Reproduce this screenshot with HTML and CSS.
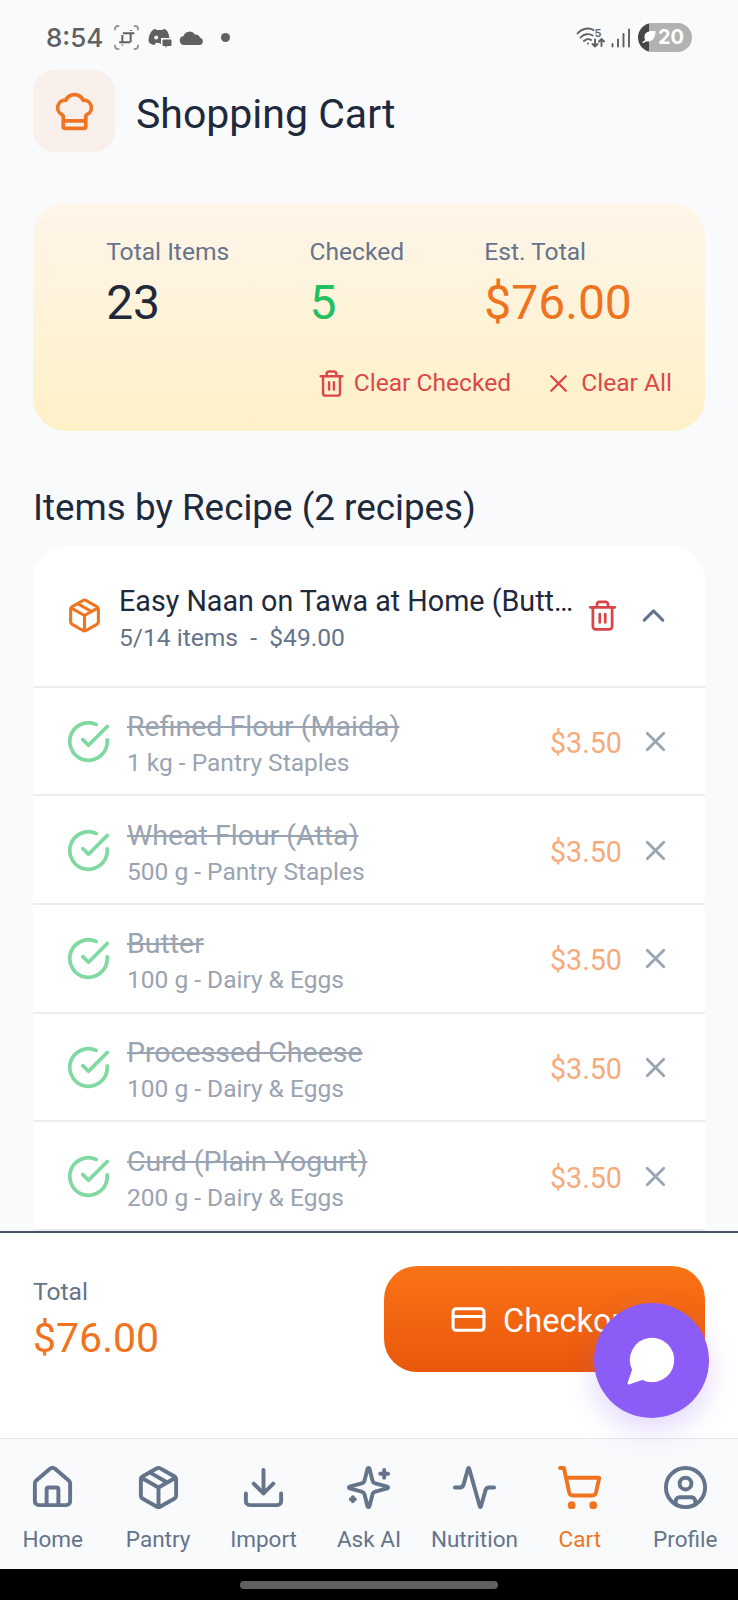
FILE: index.html
```html
<!DOCTYPE html>
<html lang="en">
<head>
<meta charset="utf-8">
<title>Shopping Cart</title>
<link rel="stylesheet" href="styles.css">
</head>
<body>
<svg class="defs" aria-hidden="true">
  <symbol id="trash" viewBox="0 0 24 24"><path d="M3 6h18M19 6v14a2 2 0 0 1-2 2H7a2 2 0 0 1-2-2V6M8 6V4a2 2 0 0 1 2-2h4a2 2 0 0 1 2 2v2M10 11v6M14 11v6"/></symbol>
  <symbol id="x" viewBox="0 0 24 24"><path d="M18 6 6 18M6 6l12 12"/></symbol>
  <symbol id="package" viewBox="0 0 24 24"><path d="M11 21.73a2 2 0 0 0 2 0l7-4A2 2 0 0 0 21 16V8a2 2 0 0 0-1-1.73l-7-4a2 2 0 0 0-2 0l-7 4A2 2 0 0 0 3 8v8a2 2 0 0 0 1 1.73zM12 22V12M3.3 7 12 12l8.7-5M7.5 4.27l9 5.15"/></symbol>
  <symbol id="check" viewBox="0 0 24 24"><path d="M22 11.080V12a10 10 0 1 1-5.930-9.140M9 11.010l3 3L22 4"/></symbol>
</svg>
<div class="screen">
  <div class="status">
    <span class="clock">8:54</span>
    <svg class="st-crop" viewBox="0 0 24 24"><path class="frame" d="M1 5V3.500Q1 1 3.500 1H5M19 1h1.500Q23 1 23 3.500V5M23 19v1.500Q23 23 20.500 23H19M5 23H3.500Q1 23 1 20.500V19"/><path d="M8 9.500v7M5 16.500h10.500M8.500 8H19.500M16 8v8.500M16.500 4.800v1M8 18.600v1"/></svg>
    <svg class="st-chat" viewBox="0 0 24 20"><path d="M7 1 9 2h5l2-1c3 .5 4.500 3 5.500 9H13v6l-2-1-3-.2L6.500 17C3 16.500.800 15 .500 13 .800 7 3 2 7 1z"/><circle class="hole" cx="8.200" cy="9.500" r="1.900"/><path d="M15.500 11.500h7q1 0 1 1v4.500q0 1-1 1H19l-1.500 2v-2h-2q-1 0-1-1v-4.500q0-1 1-1z"/></svg>
    <svg class="st-cloud" viewBox="0 0 25 14"><path d="M5 14a4.600 4.600 0 0 1-.5-9.100A6.500 6.500 0 0 1 16 3.500a5 5 0 0 1 5 3.300A3.700 3.700 0 0 1 21 14z"/></svg>
    <span class="st-dot"></span>
    <span class="grow"></span>
    <svg class="st-wifi" viewBox="0 0 29 22"><path d="M1.500 6.500C6 1 13 .500 17.500 3M4.500 10.500c3-3.500 8.500-4.500 12-2M8 14c2-2 5-2.500 7-1M19 12.500v7M16.500 17l2.500 2.500 2.500-2.500M25.500 19v-7M23 14.500l2.500-2.500 2.500 2.500"/><circle cx="12" cy="16.500" r="1"/><text x="18.500" y="9.500">5</text></svg>
    <svg class="st-bars" viewBox="0 0 20 20"><path d="M1.500 16v2.500M7 11.500v7M12.500 6v12.500M18 1.500v17"/></svg>
    <span class="battery"><svg class="leaf" viewBox="0 0 15 15"><path d="M14.500 1C8 .500 4 2 3.500 6c-.2 1.500.1 3 .8 4L1 12.500l1.500.5 3-1.800c5 1.200 9-2.200 9-10.200z"/></svg>20</span>
  </div>

  <header class="header">
    <span class="logo"><svg class="ico i45" viewBox="0 0 24 24"><path d="M17 21a1 1 0 0 0 1-1v-5.350c0-.457.316-.844.727-1.041a4 4 0 0 0-2.134-7.589 5 5 0 0 0-9.186 0 4 4 0 0 0-2.134 7.588c.411.198.727.585.727 1.041V20a1 1 0 0 0 1 1ZM6 17h12"/></svg></span>
    <h1>Shopping Cart</h1>
  </header>

  <main class="content">
    <section class="summary">
      <div class="stats">
        <div><span class="label">Total Items</span><b class="num">23</b></div>
        <div><span class="label">Checked</span><b class="num green">5</b></div>
        <div><span class="label">Est. Total</span><b class="num orange">$76.00</b></div>
      </div>
      <div class="actions">
        <span class="action"><svg class="ico i29"><use href="#trash"/></svg>Clear Checked</span>
        <span class="action"><svg class="ico i29"><use href="#x"/></svg>Clear All</span>
      </div>
    </section>

    <h2>Items by Recipe (2 recipes)</h2>

    <section class="recipe">
      <div class="recipe-head">
        <svg class="ico i37 orange"><use href="#package"/></svg>
        <div class="recipe-text"><span class="recipe-name">Easy Naan on Tawa at Home (Butt…</span><span class="recipe-sub">5/14 items  -  $49.00</span></div>
        <svg class="ico i33 red"><use href="#trash"/></svg>
        <svg class="ico i37 chevron" viewBox="0 0 24 24"><path d="m18 15-6-6-6 6"/></svg>
      </div>
      <div class="item"><svg class="ico i45 green"><use href="#check"/></svg><div class="item-text"><s>Refined Flour (Maida)</s><span>1 kg - Pantry Staples</span></div><span class="price">$3.50</span><svg class="ico i33"><use href="#x"/></svg></div>
      <div class="item"><svg class="ico i45 green"><use href="#check"/></svg><div class="item-text"><s>Wheat Flour (Atta)</s><span>500 g - Pantry Staples</span></div><span class="price">$3.50</span><svg class="ico i33"><use href="#x"/></svg></div>
      <div class="item"><svg class="ico i45 green"><use href="#check"/></svg><div class="item-text"><s>Butter</s><span>100 g - Dairy &amp; Eggs</span></div><span class="price">$3.50</span><svg class="ico i33"><use href="#x"/></svg></div>
      <div class="item"><svg class="ico i45 green"><use href="#check"/></svg><div class="item-text"><s>Processed Cheese</s><span>100 g - Dairy &amp; Eggs</span></div><span class="price">$3.50</span><svg class="ico i33"><use href="#x"/></svg></div>
      <div class="item"><svg class="ico i45 green"><use href="#check"/></svg><div class="item-text"><s>Curd (Plain Yogurt)</s><span>200 g - Dairy &amp; Eggs</span></div><span class="price">$3.50</span><svg class="ico i33"><use href="#x"/></svg></div>
    </section>
  </main>

  <section class="checkout">
    <div class="total"><span class="label">Total</span><b>$76.00</b></div>
    <div class="button"><svg class="ico i37" viewBox="0 0 24 24"><rect x="2" y="5" width="20" height="14" rx="2"/><path d="M2 10h20"/></svg><span>Checkout</span></div>
    <div class="fab"><svg viewBox="0 0 24 24"><path d="M7.900 20A9 9 0 1 0 4 16.100L2 22Z"/></svg></div>
  </section>

  <nav class="nav">
    <span class="tab"><svg class="ico i47" viewBox="0 0 24 24"><path d="M15 21v-8a1 1 0 0 0-1-1h-4a1 1 0 0 0-1 1v8"/><path d="M3 10a2 2 0 0 1 .709-1.528l7-5.999a2 2 0 0 1 2.582 0l7 5.999A2 2 0 0 1 21 10v9a2 2 0 0 1-2 2H5a2 2 0 0 1-2-2z"/></svg>Home</span>
    <span class="tab"><svg class="ico i47"><use href="#package"/></svg>Pantry</span>
    <span class="tab"><svg class="ico i47" viewBox="0 0 24 24"><path d="M12 15V3M21 15v4a2 2 0 0 1-2 2H5a2 2 0 0 1-2-2v-4M7 10l5 5 5-5"/></svg>Import</span>
    <span class="tab"><svg class="ico i47" viewBox="0 0 24 24"><path d="M9.937 15.500A2 2 0 0 0 8.500 14.063l-6.135-1.582a.5.5 0 0 1 0-.962L8.500 9.936A2 2 0 0 0 9.937 8.500l1.582-6.135a.5.5 0 0 1 .963 0L14.063 8.500A2 2 0 0 0 15.500 9.937l6.135 1.581a.5.5 0 0 1 0 .964L15.500 14.063a2 2 0 0 0-1.437 1.437l-1.582 6.135a.5.5 0 0 1-.963 0zM20 3v4M22 5h-4M4 17v2M5 18H3"/></svg>Ask AI</span>
    <span class="tab"><svg class="ico i47" viewBox="0 0 24 24"><path d="M22 12h-2.480a2 2 0 0 0-1.930 1.460l-2.350 8.360a.25.25 0 0 1-.48 0L9.240 2.180a.25.25 0 0 0-.48 0l-2.350 8.360A2 2 0 0 1 4.490 12H2"/></svg>Nutrition</span>
    <span class="tab active"><svg class="ico i47" viewBox="0 0 24 24"><circle cx="8" cy="21" r="1"/><circle cx="19" cy="21" r="1"/><path d="M2.050 2.050h2l2.660 12.420a2 2 0 0 0 2 1.580h9.780a2 2 0 0 0 1.950-1.570l1.650-7.430H5.120"/></svg>Cart</span>
    <span class="tab"><svg class="ico i47" viewBox="0 0 24 24"><path d="M7 20.662V19a2 2 0 0 1 2-2h6a2 2 0 0 1 2 2v1.662"/><circle cx="12" cy="10" r="3"/><circle cx="12" cy="12" r="10"/></svg>Profile</span>
  </nav>
  <div class="gesture"><span></span></div>
</div>
</body>
</html>
```
FILE: styles.css
```css
* { box-sizing: border-box; }
body { margin: 0; background: #f9fafc; font-family: Roboto, sans-serif; color: #1e293b; }
.defs { position: absolute; width: 0; height: 0; }
.screen { display: flex; flex-direction: column; width: 738px; height: 1600px; overflow: hidden; }
h1, h2, b { margin: 0; font-weight: 400; }

.ico { display: block; flex: none; fill: none; stroke: currentColor; stroke-width: 2; stroke-linecap: round; stroke-linejoin: round; }
.i29 { width: 29px; height: 29px; }
.i33 { width: 33px; height: 33px; }
.i37 { width: 37px; height: 37px; }
.i45 { width: 45px; height: 45px; }
.i47 { width: 47px; height: 47px; }
.orange { color: #f07420; }
.green { color: #22c05e; }
.red { color: #dc4545; }

/* Status bar */
.status { display: flex; align-items: center; height: 70px; padding: 5px 46px 0; color: #5f6062; }
.clock { width: 68px; font: 500 26px/30px Inter, sans-serif; }
.status svg { flex: none; fill: #5f6062; }
.st-crop { width: 25px; height: 25px; margin-right: 9px; }
.status .st-crop path { fill: none; stroke: #5f6062; stroke-width: 1.900; }
.status .st-crop .frame { stroke: #98999b; }
.st-chat { width: 24px; height: 20px; margin-right: 7px; }
.status .st-chat .hole { fill: #f9fafc; }
.st-cloud { width: 25px; height: 14px; margin-right: 17px; }
.st-dot { width: 9px; height: 9px; border-radius: 50%; background: #5f6062; }
.grow { flex: 1; }
.st-wifi { width: 29px; height: 22px; margin-right: 6px; }
.status .st-wifi path, .st-bars path { fill: none; stroke: #5f6062; stroke-width: 1.900; stroke-linecap: round; }
.st-wifi text { font: 600 11px Inter, sans-serif; }
.st-bars { width: 20px; height: 20px; margin-right: 7px; }
.battery { display: flex; align-items: center; width: 54px; height: 29px; padding-left: 3px; border-radius: 15px; background: linear-gradient(90deg, #454648 11px, #b1b2b4 11px); color: #fff; font: 700 20px/29px Inter, sans-serif; }
.leaf { width: 15px; height: 15px; margin-right: 2px; }
.status .leaf path { fill: #fff; }

/* Title */
.header { display: flex; align-items: center; gap: 21px; height: 82px; padding-left: 33px; }
.logo { display: grid; place-items: center; width: 82px; height: 82px; border-radius: 21px; background: #f9efeb; color: #ef7522; }
h1 { padding-top: 6px; font-size: 41px; line-height: 50px; }

/* Summary */
.content { flex: 1; min-height: 0; overflow: hidden; padding: 51px 33px 0; }
.summary { height: 228px; padding: 33px 33px 0; border-radius: 33px; background: linear-gradient(#fff5ea, #fef1c7); }
.stats { display: flex; justify-content: space-around; }
.stats > div { display: flex; flex-direction: column; }
.label { color: #64748b; font-size: 24.600px; line-height: 32px; }
.num { font-size: 48px; line-height: 70px; }
.actions { display: flex; justify-content: flex-end; gap: 33px; margin-top: 29px; }
.action { display: flex; align-items: center; gap: 8px; color: #dc4848; font-size: 24.600px; line-height: 32px; }

h2 { margin-top: 55px; font-size: 36.800px; line-height: 44px; }

/* Recipe list */
.recipe { margin-top: 16px; border-radius: 33px 33px 0 0; background: #fff; }
.recipe-head { display: flex; align-items: center; height: 141.500px; padding: 0 33px; border-bottom: 2px solid #ececee; }
.recipe-text { display: flex; flex-direction: column; flex: 1; margin-left: 16px; padding-top: 6px; }
.recipe-name { font-size: 28.700px; line-height: 37px; white-space: nowrap; }
.recipe-sub { color: #64748b; font-size: 24.600px; line-height: 35px; white-space: pre; }
.chevron { margin-left: 16px; color: #64748b; }
.item { display: flex; align-items: center; height: 108.700px; padding: 1px 33px 0; border-bottom: 2px solid #ececee; color: #9aa3b1; }
.item .green { color: #7fd9a0; }
.item-text { display: flex; flex-direction: column; flex: 1; margin-left: 16px; padding-top: 5px; }
.item-text s { font-size: 28.500px; line-height: 37px; text-decoration-thickness: 2px; }
.item-text span { font-size: 24.500px; line-height: 35px; }
.price { margin-right: 17px; padding-top: 3px; color: #f5ac7a; font-size: 28.700px; }

/* Checkout bar */
.checkout { position: relative; z-index: 1; display: flex; justify-content: space-between; height: 207px; padding: 33px 33px 0; border-top: 2px solid #4b5568; background: #fff; }
.total { display: flex; flex-direction: column; padding-top: 10px; }
.total b { color: #f07420; font-size: 41px; line-height: 60px; }
.button { display: flex; align-items: center; gap: 16px; width: 321px; height: 106px; padding-left: 66px; border-radius: 33px; background: linear-gradient(#fa7316, #e9570c); color: #fff; font-size: 32.600px; }
.button span { padding-top: 3px; }
.fab { position: absolute; left: 594px; top: 70px; display: grid; place-items: center; width: 115px; height: 115px; padding-bottom: 2px; border-radius: 50%; background: #8b5cf6; box-shadow: 0 12px 28px rgba(139, 92, 246, .24); }
.fab svg { width: 56px; height: 56px; fill: #fff; stroke: #fff; stroke-linejoin: round; }

/* Tab bar */
.nav { display: flex; height: 131px; padding-top: 25px; border-top: 1px solid #e3e5ea; background: #f9fafc; }
.tab { display: flex; flex: 1; flex-direction: column; align-items: center; gap: 13px; color: #64748b; font-size: 22.500px; line-height: 30px; }
.active { color: #f07420; }
.gesture { display: flex; justify-content: center; height: 31px; padding-top: 12px; background: #000; }
.gesture span { width: 258px; height: 8px; border-radius: 4px; background: #606060; }
```
